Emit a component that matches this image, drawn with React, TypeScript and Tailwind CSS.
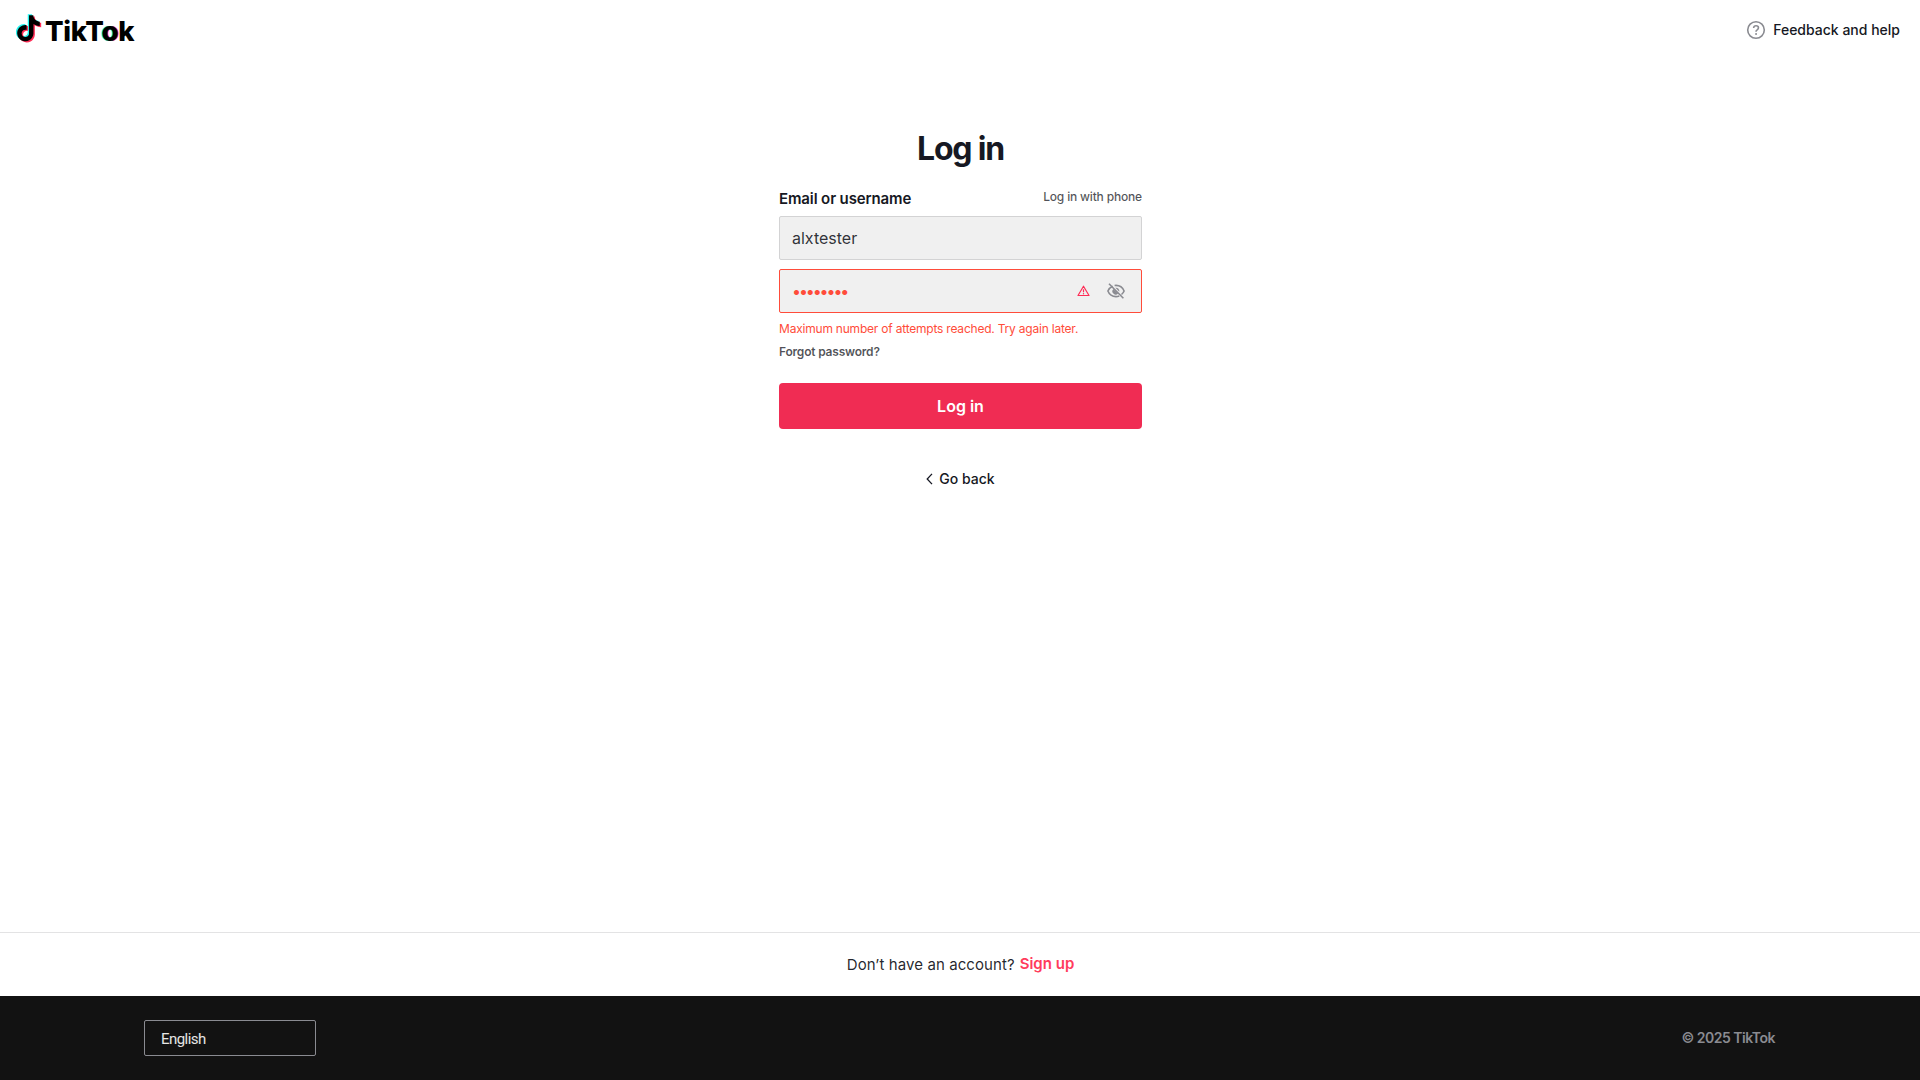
const NOTE =
  "M12.525.02c1.31-.02 2.61-.01 3.91-.02.08 1.53.63 3.09 1.75 4.17 1.12 1.11 2.7 1.62 4.24 1.79v4.03c-1.44-.05-2.89-.35-4.2-.97-.57-.26-1.1-.59-1.62-.93-.01 2.92.01 5.84-.02 8.75-.08 1.4-.54 2.79-1.35 3.94-1.31 1.92-3.58 3.17-5.91 3.21-1.43.08-2.86-.31-4.08-1.03-2.02-1.19-3.44-3.37-3.65-5.71-.02-.5-.03-1-.01-1.49.18-1.9 1.12-3.72 2.58-4.96 1.66-1.44 3.98-2.13 6.15-1.72.02 1.48-.04 2.96-.04 4.44-.99-.32-2.15-.23-3.02.37-.63.41-1.11 1.04-1.36 1.75-.21.51-.15 1.07-.14 1.61.24 1.64 1.82 3.02 3.5 2.87 1.12-.01 2.19-.66 2.77-1.61.19-.33.4-.67.41-1.06.1-1.79.06-3.57.07-5.36.01-4.03-.01-8.05.02-12.07z";

function Logo() {
  return (
    <div className="flex items-start">
      <svg width="28" height="30" viewBox="0 0 28 30" aria-hidden="true">
        <g transform="translate(-1.8 0.2) scale(1.083)" fill="#25f4ee"><path d={NOTE} /></g>
        <g transform="translate(0.9 2.4) scale(1.083)" fill="#fe2c55"><path d={NOTE} /></g>
        <g transform="translate(-0.5 1.3) scale(1.083)" fill="#000"><path d={NOTE} /></g>
      </svg>
      <div className="ml-px mt-[2px] text-[27.5px] leading-[30px] font-extrabold tracking-[-0.3px] text-black">
        TikT
        <span className="[text-shadow:-1.2px_-0.2px_0_#25f4ee,1.2px_0.3px_0_#fe2c55]">o</span>k
      </div>
    </div>
  );
}

function HelpIcon() {
  return (
    <svg width="20" height="20" viewBox="0 0 20 20" fill="none" stroke="#8a8b91" strokeWidth="1.6" aria-hidden="true">
      <circle cx="10" cy="10" r="8.3" />
      <path d="M7.6 8c.1-1.4 1.1-2.2 2.45-2.2 1.4 0 2.4.85 2.4 2.05 0 1-.6 1.5-1.3 2-.75.5-1.1.85-1.1 1.7v.25" />
      <circle cx="10.05" cy="13.9" r="1" fill="#8a8b91" stroke="none" />
    </svg>
  );
}

function WarningIcon() {
  return (
    <svg width="13" height="12" viewBox="0 0 13 12" fill="none" stroke="#fe2c55" strokeWidth="1.2" strokeLinejoin="round" aria-hidden="true">
      <path d="M6.5 1.2 12 10.5H1z" />
      <path d="M6.5 4.3v3" />
      <circle cx="6.5" cy="8.7" r=".7" fill="#fe2c55" stroke="none" />
    </svg>
  );
}

function EyeOffIcon() {
  return (
    <svg width="20" height="20" viewBox="0 0 20 20" fill="none" stroke="#8a8b91" strokeWidth="1.6" aria-hidden="true">
      <path d="M6.6 5.2C4.2 6.3 2.6 8.3 1.9 10c1.2 3 4.3 5.6 8.1 5.6 1.2 0 2.3-.25 3.3-.65" />
      <path d="M8.6 4.5c.45-.07.9-.1 1.4-.1 3.8 0 6.9 2.6 8.1 5.6-.5 1.2-1.4 2.5-2.6 3.5" />
      <path d="M7.4 7.9a3.3 3.3 0 0 0 4.7 4.7z" fill="#8a8b91" stroke="none" />
      <path d="M9.4 6.8a3.3 3.3 0 0 1 3.9 3.9z" fill="#8a8b91" stroke="none" />
      <path d="M3 2.8 17.4 17.2" />
    </svg>
  );
}

function ChevronLeft() {
  return (
    <svg width="7" height="12" viewBox="0 0 7 12" fill="none" stroke="#161823" strokeWidth="1.3" aria-hidden="true">
      <path d="M6 .9 1.2 6 6 11.1" />
    </svg>
  );
}

export default function App() {
  return (
    <div className="flex h-[1080px] w-full flex-col bg-white font-['Inter',sans-serif] text-[#161823]">
      <header className="flex h-[60px] items-center justify-between pr-5 pl-4">
        <Logo />
        <a className="flex items-center gap-[7px] text-sm font-medium">
          <HelpIcon />
          Feedback and help
        </a>
      </header>

      <main className="flex flex-1 flex-col items-center pt-[69px] pl-px">
        <form className="flex w-[363px] flex-col">
          <h1 className="text-center text-[32px] leading-10 font-bold tracking-[-1.2px]">Log in</h1>
          <div className="mt-[19px] mb-2 flex h-5 justify-between">
            <label className="text-[15px] leading-[21px] font-semibold tracking-[-0.12px]">Email or username</label>
            <a className="text-xs leading-[18px] font-medium tracking-[-0.17px] text-[#161823]/75">Log in with phone</a>
          </div>
          <div className="flex h-11 items-center rounded-[2px] border border-[#d3d3d4] bg-[#f0f0f0] px-3 text-base text-[#161823]/90">
            alxtester
          </div>
          <div className="mt-[9px] flex h-11 items-center rounded-[2px] border border-[#ff4c3a] bg-[#f0f0f0] pr-[15px] pl-3 text-[#ff4c3a]">
            <span className="flex-1 text-base tracking-[-2.1px]">••••••••</span>
            <WarningIcon />
            <span className="ml-4">
              <EyeOffIcon />
            </span>
          </div>
          <p className="mt-[7px] text-xs leading-[18px] tracking-[-0.21px] text-[#ff4c3a]">
            Maximum number of attempts reached. Try again later.
          </p>
          <a className="mt-[5px] text-xs leading-[18px] font-semibold tracking-[-0.2px] text-[#161823]/75">Forgot password?</a>
          <button type="button" className="mt-[22px] h-[46px] rounded-[4px] bg-[#f02c53] text-base font-semibold text-white">
            Log in
          </button>
          <a className="mt-10 flex items-center justify-center gap-[6px] text-sm leading-5 font-medium">
            <ChevronLeft />
            Go back
          </a>
        </form>
      </main>

      <div className="flex h-16 items-center justify-center gap-[5px] border-t border-[#e3e3e4] pl-px text-[15px]">
        <span className="pt-0.5 tracking-[0.08px] text-[#161823]/95">Don’t have an account?</span>
        <a className="font-semibold text-[#ff3b5c]">Sign up</a>
      </div>

      <footer className="flex h-[84px] items-center justify-between bg-[#121212] pr-[145px] pl-36">
        <div className="flex h-9 w-[172px] items-center rounded-[2px] border border-[#8a8b91] pt-0.5 pl-4 font-['Roboto',sans-serif] text-[15px] tracking-[-0.55px] text-white/90">
          English
        </div>
        <span className="text-sm font-semibold tracking-[-0.5px] text-[#8a8b91]">© 2025 TikTok</span>
      </footer>
    </div>
  );
}
